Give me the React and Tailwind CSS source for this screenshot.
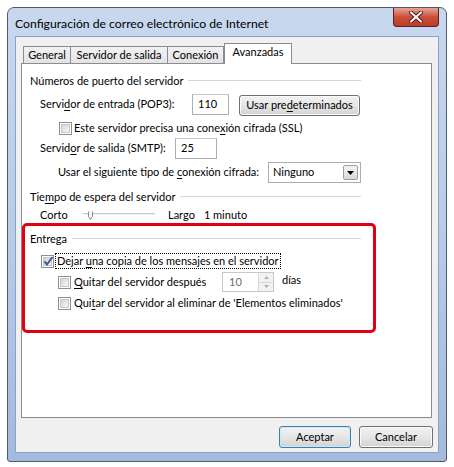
import React from "react";

const FONT = { fontFamily: "Lato, 'Noto Sans', 'Liberation Sans', sans-serif" };

// little win7 checkbox
const Check = ({ checked }) => (
  <div className="w-[13px] h-[13px] border border-[#8e8f8f] bg-white p-[1px] shrink-0">
    <div className="relative w-full h-full border border-[#c6c6c6] bg-gradient-to-br from-[#d2d4d6] to-[#f7f7f7]">
      {checked && (
        <svg className="absolute -left-[2px] -top-[3px]" width="13" height="13" viewBox="0 0 13 13">
          <path d="M2.5 6.5 L5 9.5 L10.5 2" fill="none" stroke="#3c5a9a" strokeWidth="2" />
        </svg>
      )}
    </div>
  </div>
);

const GroupHeader = ({ children, width }) => (
  <div className="flex items-center h-[16px]" style={{ width }}>
    <span className="whitespace-nowrap">{children}</span>
    <div className="flex-1 h-px bg-[#d5d5d5] ml-[5px] border-b border-white box-content"></div>
  </div>
);

const Btn = ({ children, primary, className }) => (
  <div
    className={
      "flex items-center justify-center whitespace-nowrap rounded-[3px] border bg-gradient-to-b from-[#f2f2f2] via-[#e6e6e6] to-[#d3d3d3] " +
      (primary ? "border-[#3c7fb1] shadow-[inset_0_0_0_1px_#cde9f8] " : "border-[#707070] shadow-[inset_0_0_0_1px_#fbfbfb] ") +
      className
    }
  >
    {children}
  </div>
);

const U = ({ children }) => <span className="underline underline-offset-2">{children}</span>;

export default function App() {
  return (
    <div className="w-[454px] h-[467px] bg-white pt-[7px] pl-[7px] text-[11px] text-black" style={FONT}>
      {/* window */}
      <div className="w-[440px] h-[455px] rounded-t-[7px] rounded-b-[3px] border border-[#4f5b6d] bg-gradient-to-b from-[#c7d8ee] via-[#b8cce8] to-[#a3bade] flex flex-col">
        {/* title bar */}
        <div className="h-[28px] flex items-start justify-between">
          <div className="pl-[7px] pt-[7px] text-[12.2px] text-black whitespace-nowrap">
            Configuración de correo electrónico de Internet
          </div>
          <div className="mr-[7px] w-[46px] h-[19px] rounded-b-[4px] border border-[#5a2020] border-t-0 bg-gradient-to-b from-[#e8a493] via-[#c74f3c] to-[#c23a22] flex items-center justify-center">
            <svg width="14" height="12" viewBox="0 0 14 12">
              <path d="M2 1.5 L12 10.5 M12 1.5 L2 10.5" stroke="#4a1510" strokeWidth="4" strokeLinecap="round" />
              <path d="M2 1.5 L12 10.5 M12 1.5 L2 10.5" stroke="#ffffff" strokeWidth="2.2" strokeLinecap="round" />
            </svg>
          </div>
        </div>

        {/* client area */}
        <div className="ml-[7px] w-[424px] h-[417px] bg-[#f0f0f0] border border-[#8da2c2] flex flex-col">
          <div className="pl-[5px] pt-[6px]">
            {/* tabs */}
            <div className="flex items-end h-[20px] pl-[2px]">
              <div className="w-[48px] h-[17px] flex items-center justify-center border border-b-0 border-[#898c95] bg-gradient-to-b from-[#f2f2f2] to-[#e3e3e3]">General</div>
              <div className="w-[97px] h-[17px] flex items-center justify-center border border-b-0 border-l-0 border-[#898c95] bg-gradient-to-b from-[#f2f2f2] to-[#e3e3e3]">Servidor de salida</div>
              <div className="w-[56px] h-[17px] flex items-center justify-center border border-b-0 border-l-0 border-[#898c95] bg-gradient-to-b from-[#f2f2f2] to-[#e3e3e3]">Conexión</div>
              <div className="w-[68px] h-[21px] -mb-px pb-[3px] flex items-center justify-center border border-b-0 border-[#898c95] bg-white relative z-10">Avanzadas</div>
            </div>

            {/* tab panel */}
            <div className="w-[411px] h-[355px] bg-white border border-[#898c95]">
              <div className="pl-[8px] pt-[9px]">
                <GroupHeader width={331}>Números de puerto del servidor</GroupHeader>
              </div>

              <div className="flex items-center h-[22px] mt-[4px] pl-[18px]">
                <span className="w-[152px] whitespace-nowrap">
                  Servi<U>d</U>or de entrada (POP3):
                </span>
                <div className="w-[37px] h-[21px] border border-[#abadb3] border-t-[#c6c9d0] flex items-center pl-[5px]">110</div>
                <Btn className="ml-[10px] w-[121px] h-[21px] mt-[2px]">
                  Usar pre<U>d</U>eterminados
                </Btn>
              </div>

              <div className="flex items-center h-[16px] mt-[5px] pl-[37px] gap-[2px]">
                <Check />
                <span className="whitespace-nowrap">
                  Este servidor precisa una cone<U>x</U>ión cifrada (SSL)
                </span>
              </div>

              <div className="flex items-center h-[21px] mt-[2px] pl-[18px]">
                <span className="w-[135px] whitespace-nowrap">
                  Servid<U>o</U>r de salida (SMTP):
                </span>
                <div className="w-[42px] h-[21px] border border-[#abadb3] border-t-[#c6c9d0] flex items-center pl-[5px]">25</div>
              </div>

              <div className="flex items-center h-[21px] mt-[3px] pl-[36px]">
                <span className="w-[210px] whitespace-nowrap">
                  Usar el siguiente tipo de <U>c</U>onexión cifrada:
                </span>
                <div className="w-[93px] h-[21px] border border-[#abadb3] flex items-center justify-between pl-[4px] pr-[2px]">
                  <span>Ninguno</span>
                  <div className="w-[15px] h-[15px] border border-[#9da0a6] rounded-[2px] bg-gradient-to-b from-[#f4f4f4] to-[#d9d9d9] flex items-center justify-center">
                    <svg width="7" height="4" viewBox="0 0 7 4">
                      <path d="M0 0 L7 0 L3.5 4 Z" fill="#000" />
                    </svg>
                  </div>
                </div>
              </div>

              <div className="pl-[8px] mt-[6px]">
                <GroupHeader width={331}>
                  Tie<U>m</U>po de espera del servidor
                </GroupHeader>
              </div>

              <div className="flex items-center h-[15px] mt-[3px] pl-[18px]">
                <span className="w-[43px]">Corto</span>
                <svg width="72" height="10" viewBox="0 0 72 10">
                  <line x1="0" y1="2.5" x2="72" y2="2.5" stroke="#c8c8c8" strokeWidth="1" />
                  <line x1="0" y1="3.5" x2="72" y2="3.5" stroke="#eeeeee" strokeWidth="1" />
                  <path d="M5.5 0.5 L5.5 5.5 L7.5 8.5 L9.5 5.5 L9.5 0.5" fill="#f4f4f4" stroke="#8b8b8b" strokeWidth="1" />
                </svg>
                <span className="ml-[13px]">Largo</span>
                <span className="ml-[9px]">1 minuto</span>
              </div>

              {/* highlighted delivery group */}
              <div className="w-[354px] h-[110px] border-[3px] border-[#e00010] rounded-[5px]">
                <div className="pl-[5px] mt-[5px]">
                  <GroupHeader width={331}>Entrega</GroupHeader>
                </div>
                <div className="flex items-center h-[16px] mt-[6px] pl-[16px] gap-[1px]">
                  <Check checked />
                  <span className="whitespace-nowrap border border-dotted border-black px-[1px] leading-[14px]">
                    Dejar <U>u</U>na copia de los mensajes en el servidor
                  </span>
                </div>
                <div className="flex items-center h-[20px] mt-[3px] pl-[33px] gap-[3px]">
                  <Check />
                  <span className="w-[145px] whitespace-nowrap">
                    <U>Q</U>uitar del servidor después
                  </span>
                  <div className="w-[52px] h-[20px] border border-[#c5c8cc] flex items-center justify-between pl-[6px] text-[#6d6d6d]">
                    <span className="mt-[1px]">10</span>
                    <div className="w-[15px] h-full flex flex-col border-l border-[#d6d6d6]">
                      <div className="flex-1 bg-[#f2f2f2] border-b border-[#d6d6d6] flex items-center justify-center">
                        <svg width="5" height="3" viewBox="0 0 5 3"><path d="M0 3 L2.5 0 L5 3 Z" fill="#b0b0b0" /></svg>
                      </div>
                      <div className="flex-1 bg-[#f2f2f2] flex items-center justify-center">
                        <svg width="5" height="3" viewBox="0 0 5 3"><path d="M0 0 L5 0 L2.5 3 Z" fill="#b0b0b0" /></svg>
                      </div>
                    </div>
                  </div>
                  <span className="ml-[5px] -mt-[3px]">días</span>
                </div>
                <div className="flex items-center h-[16px] mt-[3px] pl-[33px] gap-[3px]">
                  <Check />
                  <span className="whitespace-nowrap">
                    Qui<U>t</U>ar del servidor al eliminar de 'Elementos eliminados'
                  </span>
                </div>
              </div>
            </div>
          </div>

          {/* dialog buttons */}
          <div className="flex justify-end gap-[8px] pr-[5px] mt-[8px]">
            <Btn primary className="w-[72px] h-[22px]">Aceptar</Btn>
            <Btn className="w-[74px] h-[22px]">Cancelar</Btn>
          </div>
        </div>
      </div>
    </div>
  );
}
